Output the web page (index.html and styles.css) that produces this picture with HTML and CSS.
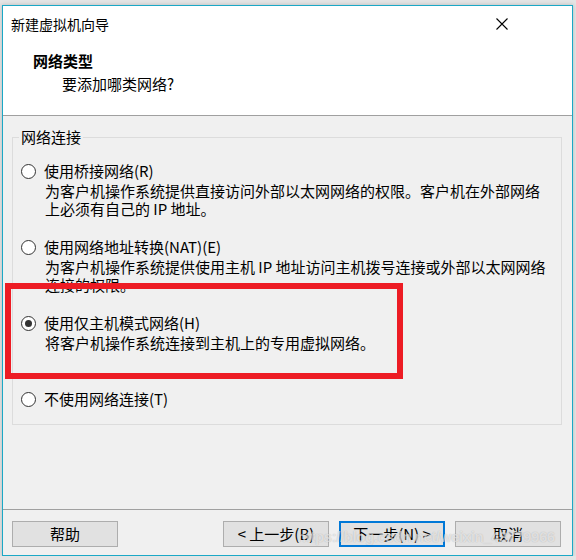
FILE: index.html
```html
<!DOCTYPE html>
<html>
    <head>
        <title>新建虚拟机向导</title>
        <link rel="stylesheet" href="styles.css">
    </head>
    <body>
        <div class="window">
            <div class="header">
                <div class="titlebar">
                    <span class="title">新建虚拟机向导</span>
                    <span class="close">
                        <svg width="12" height="12" viewBox="0 0 12 12"><path d="M0.5 0.5 L11.5 11.5 M11.5 0.5 L0.5 11.5" stroke="#000" stroke-width="1.1" fill="none"/></svg>
                    </span>
                </div>
                <div class="heading">网络类型</div>
                <div class="subheading">要添加哪类网络?</div>
            </div>

            <fieldset class="group">
                <legend>网络连接</legend>

                <div class="option">
                    <div class="choice"><span class="radio"></span>使用桥接网络(R)</div>
                    <p class="desc">为客户机操作系统提供直接访问外部以太网网络的权限。客户机在外部网络<br>上必须有自己的 IP 地址。</p>
                </div>

                <div class="option">
                    <div class="choice"><span class="radio"></span>使用网络地址转换(NAT)(E)</div>
                    <p class="desc">为客户机操作系统提供使用主机 IP 地址访问主机拨号连接或外部以太网网络<br>连接的权限。</p>
                </div>

                <div class="option">
                    <div class="choice"><span class="radio checked"></span>使用仅主机模式网络(H)</div>
                    <p class="desc">将客户机操作系统连接到主机上的专用虚拟网络。</p>
                </div>

                <div class="option last">
                    <div class="choice"><span class="radio"></span>不使用网络连接(T)</div>
                </div>
            </fieldset>

            <div class="footer">
                <button class="btn">帮助</button>
                <span class="spacer"></span>
                <button class="btn">&lt; 上一步(B)</button>
                <button class="btn default">下一步(N) &gt;</button>
                <button class="btn">取消</button>
            </div>
        </div>

        <!-- annotation drawn over the dialog -->
        <div class="highlight"></div>
        <div class="watermark">https://blog.csdn.net/weixin_43779966</div>
    </body>
</html>
```

FILE: styles.css
```css
html {
    font-family: "Noto Sans CJK SC", "Liberation Sans", sans-serif;
    font-size: 15px;
    color: #000;
}
body {
    margin: 0;
    background: #e4e4e4;
    overflow: hidden;
}
.window {
    margin: 5px 0 0 2px;
    width: 569px;
    height: 549px;
    border: 1px solid #1ba8c6;
    background: #f0f0f0;
    display: flex;
    flex-direction: column;
    box-shadow: 0 0 4px rgba(0, 0, 0, 0.2);
}
.header {
    height: 109px;
    background: #fff;
    border-bottom: 1px solid #a0a0a0;
}
.titlebar {
    height: 36px;
    display: flex;
    align-items: center;
    justify-content: space-between;
    padding-left: 8px;
}
.title {
    font-size: 14px;
    line-height: 18px;
}
.close {
    width: 46px;
    height: 36px;
    margin-right: 47px;
    display: flex;
    align-items: center;
    justify-content: center;
}
.close svg { display: block; }
.heading {
    font-weight: bold;
    line-height: 18px;
    margin: 10px 0 0 30px;
}
.subheading {
    line-height: 18px;
    margin: 5px 0 0 59px;
}
.group {
    margin: 12px 10px 0 9px;
    padding: 16px 8px 16px 8px;
    border: 1px solid #dcdcdc;
}
.group legend {
    margin-left: -2px;
    padding: 0 2px;
    line-height: 18px;
}
.option {
    height: 76px;
}
.option.last {
    height: auto;
}
.choice {
    display: flex;
    align-items: center;
    line-height: 18px;
}
.radio {
    width: 13px;
    height: 13px;
    border: 1px solid #333;
    border-radius: 50%;
    background: #fff;
    margin-right: 8px;
    display: flex;
    align-items: center;
    justify-content: center;
}
.radio.checked::after {
    content: "";
    width: 7px;
    height: 7px;
    border-radius: 50%;
    background: #333;
}
.desc {
    margin: 2px 0 0 24px;
    line-height: 18px;
}
.footer {
    margin-top: auto;
    border-top: 1px solid #a0a0a0;
    height: 46px;
    box-sizing: border-box;
    padding: 11px 11px 0 9px;
    display: flex;
    align-items: flex-start;
    gap: 10px;
}
.spacer { flex: 1; }
.btn {
    width: 106px;
    height: 26px;
    background: #e1e1e1;
    border: 1px solid #adadad;
    font: inherit;
    line-height: 18px;
    padding: 0;
    color: #000;
}
.btn.default {
    border: 2px solid #0078d7;
}
.highlight {
    position: absolute;
    left: 5px;
    top: 283px;
    width: 398px;
    height: 96px;
    box-sizing: border-box;
    border: 6px solid #ed1c24;
}
.watermark {
    position: absolute;
    left: 297px;
    top: 528px;
    font-family: "Liberation Sans", sans-serif;
    font-size: 15px;
    font-weight: bold;
    color: rgba(255, 255, 255, 0.6);
    text-shadow: 0 0 1px rgba(0, 0, 0, 0.25);
    letter-spacing: -0.4px;
}
```
